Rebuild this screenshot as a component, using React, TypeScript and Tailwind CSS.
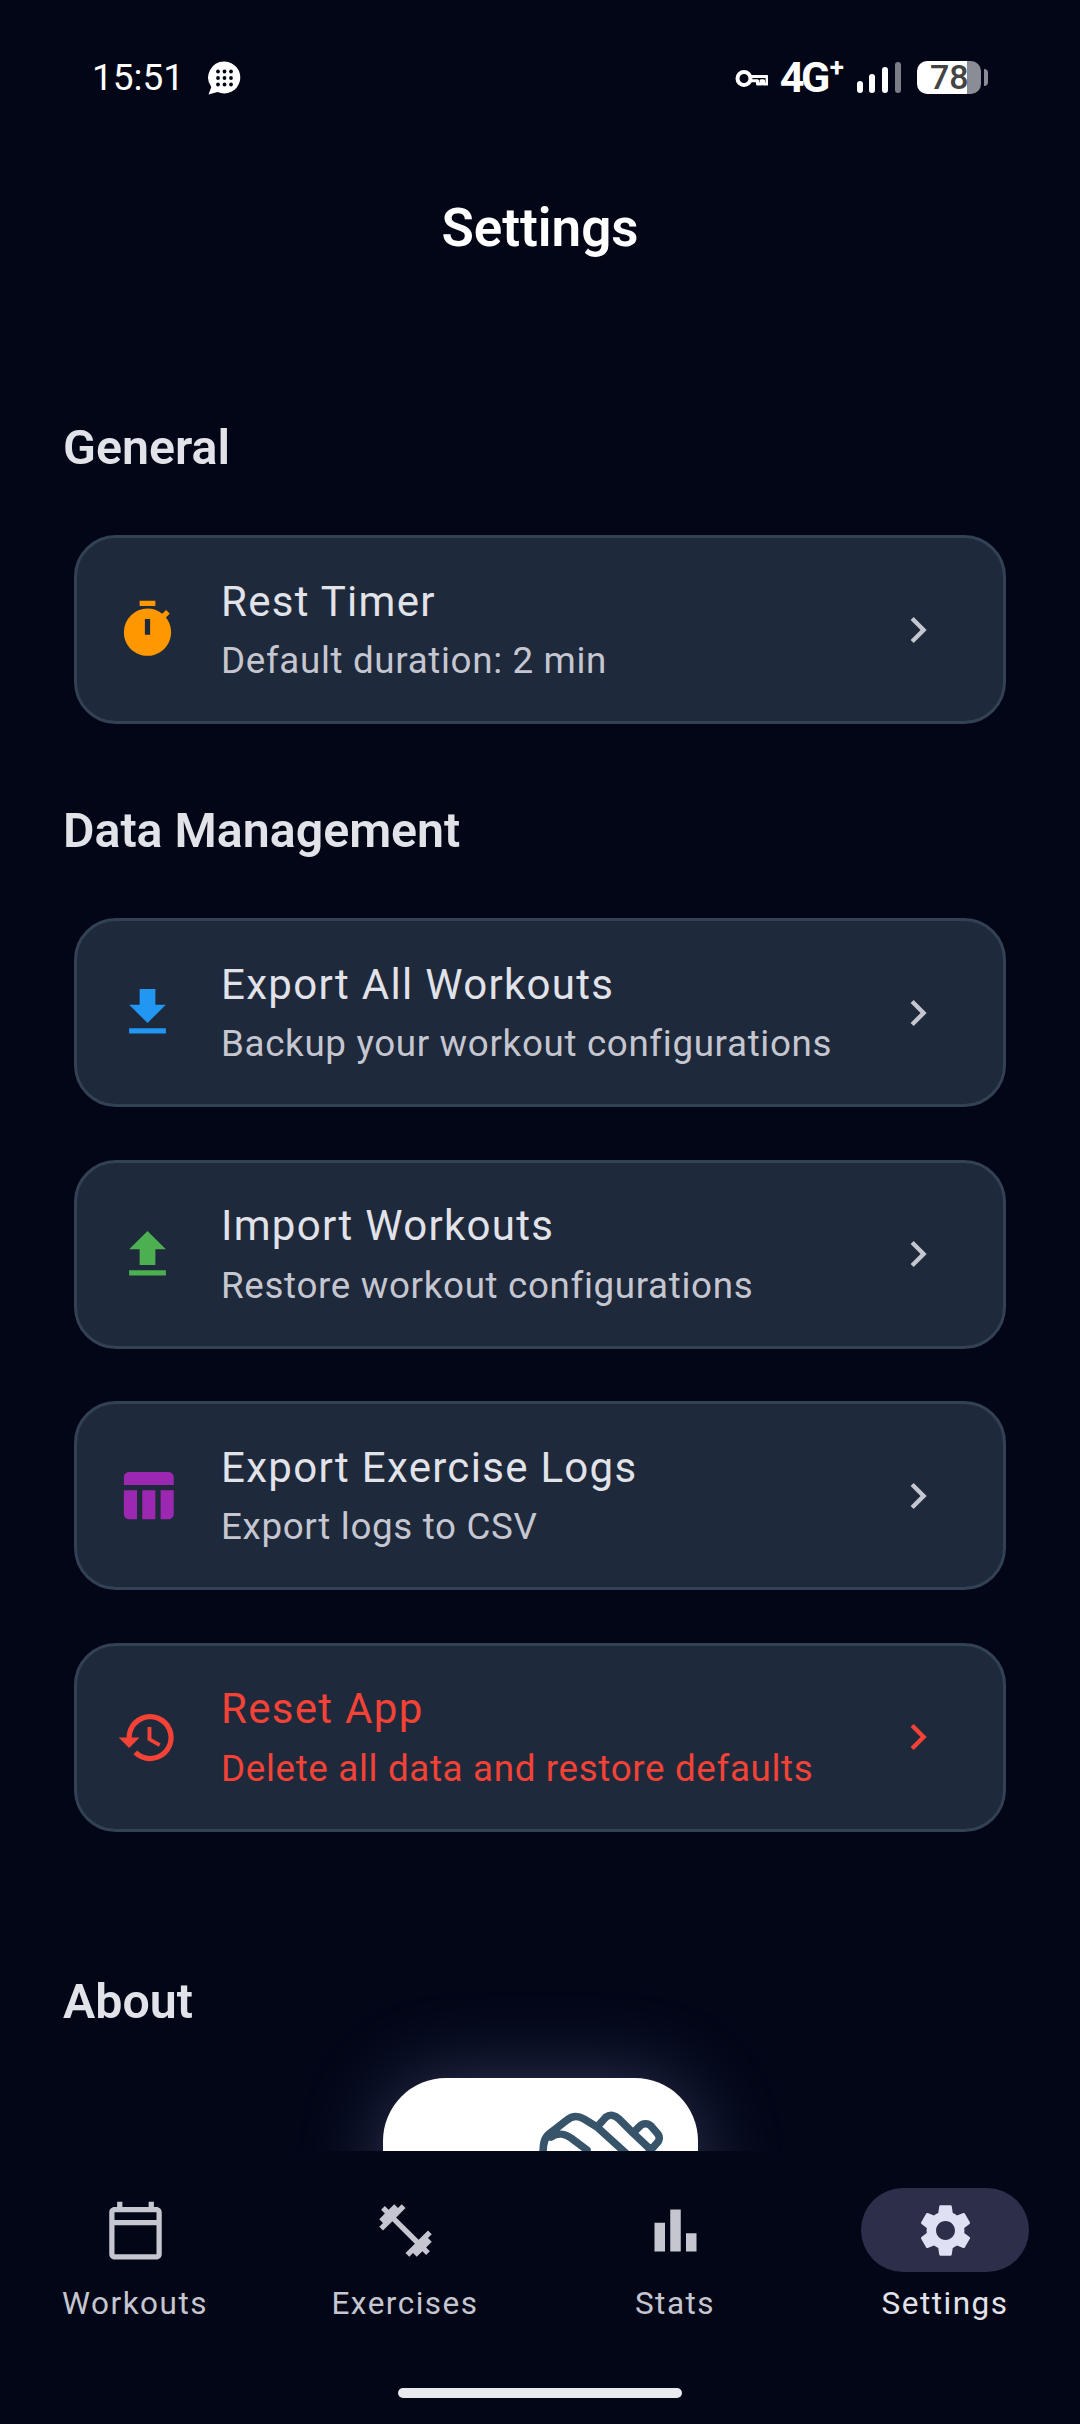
import { ReactNode } from 'react';
import {
  MdBarChart,
  MdChevronRight,
  MdFileDownload,
  MdFileUpload,
  MdFitnessCenter,
  MdOutlineCalendarToday,
  MdRestore,
  MdSettings,
  MdTableChart,
  MdTimer,
} from 'react-icons/md';

const font = { fontFamily: 'Roboto, sans-serif' };

function StatusBar() {
  return (
    <div className="flex h-[158px] items-start justify-between pl-[92px] pr-[92px] pt-[59px] text-white">
      <div className="flex h-[36px] items-center gap-[23px]">
        <span className="text-[37px] leading-none">15:51</span>
        {/* chat bubble */}
        <svg width="34" height="34" viewBox="0 0 34 34" className="mt-[2px]">
          <path d="M17.500 0.500a16 16 0 1 1 -7 30.500l-9 2.500 2.800-7.500A16 16 0 0 1 17.500 0.500z" fill="#fff" />
          {[10.500, 17, 23.500].map((cy) =>
            [11, 17.500, 24].map((cx) => <circle key={`${cx}-${cy}`} cx={cx} cy={cy} r="1.900" fill="#020617" />),
          )}
        </svg>
      </div>
      <div className="flex h-[36px] items-center">
        {/* vpn key */}
        <svg width="33" height="19" viewBox="0 0 33 19" fill="none" className="mt-[2px]">
          <circle cx="9" cy="9.500" r="6.500" stroke="#fff" strokeWidth="4" />
          <path d="M15 7.500h17v7.500h-3.500v-3.200h-2.500v3.200h-3.500v-3.200h-7.500" stroke="#fff" strokeWidth="3" strokeLinejoin="round" />
        </svg>
        <span className="ml-[12px] flex items-start text-[43px] font-bold leading-none tracking-[-3.500px] text-white">
          4G<span className="-mt-[2px] ml-[3px] text-[26px] leading-none">+</span>
        </span>
        {/* signal */}
        <div className="ml-[16px] flex h-[32px] items-end gap-[6.500px]">
          <div className="h-[12px] w-[6px] rounded-full bg-white" />
          <div className="h-[19px] w-[6px] rounded-full bg-white" />
          <div className="h-[26px] w-[6.500px] rounded-full bg-white" />
          <div className="h-[31px] w-[6.500px] rounded-full bg-[#7a7d88]" />
        </div>
        {/* battery */}
        <div className="relative ml-[16px] flex h-[33px] w-[64px]">
          <div className="h-full w-[50px] rounded-l-[10px] bg-white" />
          <div className="h-full w-[14px] rounded-r-[10px] bg-[#8a8c96]" />
          <span className="absolute inset-y-0 left-[13px] flex items-center text-[34px] font-medium leading-none text-[#444444]">
            78
          </span>
        </div>
        <div className="ml-[3px] h-[17px] w-[4px] rounded-r-full bg-[#8a8c96]" />
      </div>
    </div>
  );
}

function SectionTitle({ children, className }: { children: ReactNode; className: string }) {
  return <h2 className={`pl-[63px] text-[48.300px] font-semibold leading-[60px] text-[#e2e2e9] ${className}`}>{children}</h2>;
}

function SettingRow({
  icon,
  title,
  subtitle,
  danger,
}: {
  icon: ReactNode;
  title: string;
  subtitle: string;
  danger?: boolean;
}) {
  return (
    <div className="mx-[74px] flex h-[189px] items-center rounded-[42px] border-[3px] border-[#334155] bg-[#1e293b] pl-[39px] pr-[59px]">
      <div className="flex h-[63px] w-[63px] shrink-0 items-center justify-center">{icon}</div>
      <div className="ml-[42px] min-w-0 flex-1">
        <div className={`text-[42px] leading-[60px] tracking-[1.300px] ${danger ? 'text-[#f44336]' : 'text-[#e2e2e9]'}`}>{title}</div>
        <div className={`mt-[3.500px] text-[36.750px] leading-[52px] tracking-[0.660px] ${danger ? 'text-[#f44336]' : 'text-[#c5c6d0]'}`}>
          {subtitle}
        </div>
      </div>
      <MdChevronRight size={52} color={danger ? '#f44336' : '#c5c6d0'} />
    </div>
  );
}

function NavItem({ icon, label, active }: { icon: ReactNode; label: string; active?: boolean }) {
  return (
    <div className="flex w-[270px] flex-col items-center pt-[37px]">
      <div className={`flex h-[84px] w-[168px] items-center justify-center rounded-full ${active ? 'bg-[#2d2f4a]' : ''}`}>{icon}</div>
      <span className={`mt-[10px] text-[31.500px] leading-[44px] tracking-[1.500px] ${active ? 'text-[#e2e2e9]' : 'text-[#c5c6d0]'}`}>
        {label}
      </span>
    </div>
  );
}

export default function App() {
  return (
    <div className="flex h-[2424px] w-[1080px] flex-col overflow-hidden bg-[#020617]" style={font}>
      <div className="min-h-0 flex-1 overflow-hidden">
        <StatusBar />
        <h1 className="h-[140px] text-center text-[53px] font-semibold leading-[140px] text-white">Settings</h1>

        <SectionTitle className="mt-[120px]">General</SectionTitle>
        <div className="mt-[57px]">
          <SettingRow icon={<MdTimer size={63} color="#ff9800" />} title="Rest Timer" subtitle="Default duration: 2 min" />
        </div>

        <SectionTitle className="mt-[77px]">Data Management</SectionTitle>
        <div className="mt-[57px] flex flex-col gap-[52.500px]">
          <SettingRow
            icon={<MdFileDownload size={63} color="#2196f3" />}
            title="Export All Workouts"
            subtitle="Backup your workout configurations"
          />
          <SettingRow
            icon={<MdFileUpload size={63} color="#4caf50" />}
            title="Import Workouts"
            subtitle="Restore workout configurations"
          />
          <SettingRow
            icon={<MdTableChart size={63} color="#9c27b0" />}
            title="Export Exercise Logs"
            subtitle="Export logs to CSV"
          />
          <SettingRow
            icon={<MdRestore size={63} color="#f44336" />}
            title="Reset App"
            subtitle="Delete all data and restore defaults"
            danger
          />
        </div>

        <SectionTitle className="mt-[140px]">About</SectionTitle>
        <div className="relative mx-auto mt-[46px] h-[315px] w-[315px] rounded-[63px] bg-white shadow-[0_0_84px_rgba(180,180,255,0.28)]">
          <svg width="315" height="100" viewBox="0 0 315 100" fill="none" className="absolute left-0 top-0">
            <path
              d="M160 76C160 66 161 60 166 56L184 42C190 37 196 38 201 41L214 49L223 39C227 36 232 37 236 41L250 55L257 48C260 45 265 45 268 48L274 55C277 58 277 62 274 65L266 74M168 59C176 54 182 56 188 60L204 72M214 49L246 78M250 55L268 72"
              stroke="#37546a"
              strokeWidth="7.500"
              strokeLinecap="round"
              strokeLinejoin="round"
            />
          </svg>
        </div>
      </div>

      <nav className="relative z-10 h-[273px] shrink-0 bg-[#020617]">
        <div className="flex">
          <NavItem icon={<MdOutlineCalendarToday size={63} color="#c5c6d0" />} label="Workouts" />
          <NavItem icon={<MdFitnessCenter size={63} color="#c5c6d0" />} label="Exercises" />
          <NavItem icon={<MdBarChart size={63} color="#c5c6d0" />} label="Stats" />
          <NavItem icon={<MdSettings size={63} color="#e0e0f5" />} label="Settings" active />
        </div>
        <div className="absolute left-[398px] top-[237px] h-[10px] w-[284px] rounded-full bg-[#e8eaed]" />
      </nav>
    </div>
  );
}
